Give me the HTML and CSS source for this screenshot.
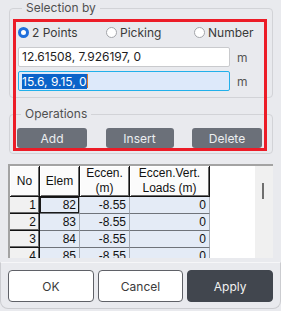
FILE: index.html
```html
<!DOCTYPE html>
<html lang="en">
<head>
  <meta charset="UTF-8">
  <meta name="viewport" content="width=device-width, initial-scale=1.0">
  <title>Eccentricity</title>
  <link rel="stylesheet" href="styles.css">
</head>
<body>
  <div class="panel">
    <fieldset class="group selection">
      <legend>Selection by</legend>
      <div class="radio-row">
        <label class="radio"><span class="dot checked"></span>2 Points</label>
        <label class="radio"><span class="dot"></span>Picking</label>
        <label class="radio"><span class="dot"></span>Number</label>
      </div>
      <div class="input-row">
        <div class="field">12.61508, 7.926197, 0</div>
        <span class="unit">m</span>
      </div>
      <div class="input-row">
        <div class="field active"><span class="sel">15.6, 9.15, 0</span><span class="caret"></span></div>
        <span class="unit">m</span>
      </div>
    </fieldset>

    <fieldset class="group operations">
      <legend>Operations</legend>
      <div class="ops">
        <button class="btn-op">Add</button>
        <button class="btn-op narrow">Insert</button>
        <button class="btn-op">Delete</button>
      </div>
    </fieldset>

    <div class="highlight"></div>

    <div class="grid-frame">
      <table class="grid">
        <colgroup>
          <col class="c-no"><col class="c-elem"><col class="c-ecc"><col class="c-vert">
        </colgroup>
        <thead>
          <tr>
            <th>No</th>
            <th>Elem</th>
            <th>Eccen.<br>(m)</th>
            <th>Eccen.Vert.<br>Loads (m)</th>
          </tr>
        </thead>
        <tbody>
          <tr><td class="no">1</td><td class="current">82</td><td>-8.55</td><td>0</td></tr>
          <tr><td class="no">2</td><td>83</td><td>-8.55</td><td>0</td></tr>
          <tr><td class="no">3</td><td>84</td><td>-8.55</td><td>0</td></tr>
          <tr><td class="no">4</td><td>85</td><td>-8.55</td><td>0</td></tr>
        </tbody>
      </table>
      <div class="scroll"><span class="thumb"></span></div>
    </div>
  </div>

  <div class="footer">
    <button class="btn-light">OK</button>
    <button class="btn-light">Cancel</button>
    <button class="btn-dark">Apply</button>
  </div>
</body>
</html>
```

FILE: styles.css
```css
body {
  font-family: Inter, 'Noto Sans', sans-serif;
  margin: 0;
  width: 281px;
  height: 311px;
  background: #e9eaee;
  color: #3a3a3a;
  font-size: 12px;
  overflow: hidden;
  user-select: none;
}

.panel {
  position: relative;
}

.group {
  margin: 0 8px 0 9px;
  border: 1px solid #d2d3d7;
  border-radius: 4px;
  min-width: 0;
}

.group legend {
  padding: 0 4px;
  margin-left: 4px;
  height: 16px;
  line-height: 16px;
  color: #505050;
}

.selection {
  padding: 8px 9px 6px 8px;
}

.radio-row {
  display: grid;
  grid-template-columns: 88px 88px auto;
  height: 16px;
  margin-bottom: 7px;
}

.radio {
  display: flex;
  align-items: center;
  gap: 3px;
}

.dot {
  width: 11px;
  height: 11px;
  border: 1px solid #a3a5aa;
  border-radius: 50%;
  background: #fff;
  box-sizing: border-box;
}

.dot.checked {
  border: 3px solid #1f6fdc;
}

.input-row {
  display: flex;
  align-items: center;
  gap: 7px;
  margin-bottom: 4px;
}

.input-row:last-child {
  margin-bottom: 0;
}

.field {
  width: 212px;
  height: 20px;
  box-sizing: border-box;
  border: 1px solid #c9cacd;
  border-radius: 2px;
  background: #fff;
  padding: 0 3px;
  line-height: 18px;
  color: #1e1e1e;
  display: flex;
  align-items: center;
}

.field.active {
  background: #dde9fa;
  border-color: #22b0ea;
}

.sel {
  background: #0a63c9;
  color: #fff;
  line-height: 15px;
}

.caret {
  width: 1px;
  height: 14px;
  background: #d97a2a;
}

.unit {
  color: #555;
}

.operations {
  margin-top: 8px;
  padding: 6px 10px 5px 7px;
}

.ops {
  display: flex;
  justify-content: space-between;
}

button {
  font-family: Inter, 'Noto Sans', sans-serif;
  font-size: 12px;
  cursor: pointer;
}

.btn-op {
  width: 70px;
  height: 20px;
  padding: 0;
  border: none;
  border-radius: 3px;
  background: #6b7079;
  color: #eceef0;
}

.btn-op.narrow {
  width: 68px;
}

.highlight {
  position: absolute;
  left: 13px;
  top: 19px;
  width: 254px;
  height: 132px;
  border: 3px solid #ec1c27;
  box-sizing: border-box;
  pointer-events: none;
}

.grid-frame {
  margin: 10px 8px 0 8px;
  height: 94px;
  box-sizing: border-box;
  border-top: 2px solid #a3a3a3;
  border-left: 2px solid #a3a3a3;
  background: #fff;
  display: flex;
  overflow: hidden;
}

.grid {
  border-collapse: separate;
  border-spacing: 0;
  table-layout: fixed;
  width: 200px;
  font-family: 'Liberation Sans', Arial, sans-serif;
  font-size: 12px;
  color: #111;
  align-self: flex-start;
}

.c-no { width: 30px; }
.c-elem { width: 40px; }
.c-ecc { width: 50px; }
.c-vert { width: 80px; }

.grid th {
  height: 30px;
  padding: 0;
  font-weight: normal;
  line-height: 15px;
  background: #fbfbfb;
  border-right: 1px solid #111;
  border-bottom: 1px solid #111;
  box-shadow: inset 1px 1px 0 #fff, inset -1px -1px 0 #6a6a6a;
}

.grid td {
  height: 16px;
  padding: 0 3px 0 0;
  text-align: right;
  line-height: 16px;
  background: #e4ebf6;
  border-right: 1px solid #a6acb5;
  border-bottom: 1px solid #6f737a;
}

.grid td.no {
  background: #f1f1f1;
  border-right: 1px solid #111;
  border-bottom: 1px solid #111;
  box-shadow: inset -1px -1px 0 #6a6a6a;
}

.grid td.current {
  box-shadow: inset 0 0 0 1px #1a1a1a;
}

.scroll {
  margin-left: auto;
  width: 18px;
  align-self: stretch;
  background: #f0f0f0;
  position: relative;
}

.thumb {
  position: absolute;
  left: 7px;
  top: 17px;
  width: 2px;
  height: 16px;
  background: #6f6f6f;
}

.footer {
  margin-top: 4px;
  height: 47px;
  box-sizing: border-box;
  border: 1px solid #cbccd0;
  border-top-color: #f6f6f8;
  border-radius: 0 0 8px 8px;
  padding: 7px 7px 0 7px;
  display: grid;
  grid-template-columns: 1fr 1fr 1fr;
  gap: 4px;
  align-items: start;
}

.btn-light,
.btn-dark {
  height: 32px;
  border-radius: 4px;
  font-size: 12px;
}

.btn-light {
  background: #fff;
  border: 1px solid #5f6167;
  color: #3a3a3a;
}

.btn-dark {
  background: #41464e;
  border: 1px solid #41464e;
  color: #f2f2f2;
}
```
